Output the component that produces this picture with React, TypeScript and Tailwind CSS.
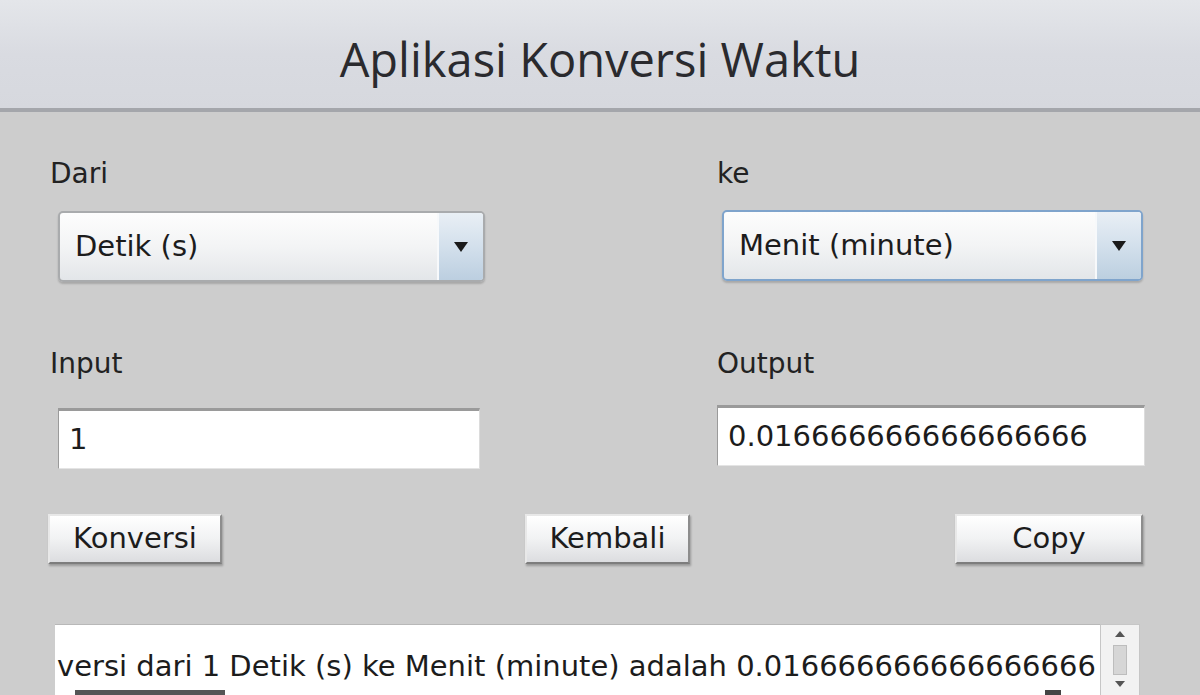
import React from 'react';

const font = { fontFamily: '"DejaVu Sans", "Liberation Sans", sans-serif' };

function Combo({ value, focused, className }: { value: string; focused?: boolean; className?: string }) {
    return (
        <div
            className={`flex h-[71px] rounded-[5px] border-2 ${focused ? 'border-[#7fa4cc]' : 'border-[#a9abad]'} bg-gradient-to-b from-[#fdfdfd] via-[#f3f4f5] to-[#e3e6e9] shadow-[0_2px_2px_rgba(0,0,0,0.18)] ${className ?? ''}`}
        >
            <div className="flex-1 flex items-center pl-[15px] text-[29px] text-[#1c1c1c]">{value}</div>
            <div className="w-[46px] flex items-center justify-center border-l-2 border-[#f7f9fb] bg-gradient-to-b from-[#e9eff5] via-[#d3e0ec] to-[#bccfe0] rounded-r-[3px]">
                <svg width="14" height="10" viewBox="0 0 14 10">
                    <path d="M0 0 H14 L7 10 Z" fill="#1a1a1a" />
                </svg>
            </div>
        </div>
    );
}

function Field({ value, className }: { value: string; className?: string }) {
    return (
        <div
            className={`h-[61px] bg-white border-t-[3px] border-l border-[#9a9a9a] border-r border-r-[#dcdcdc] border-b border-b-[#e4e4e4] flex items-center pl-[10px] text-[29px] text-[#1c1c1c] ${className ?? ''}`}
        >
            {value}
        </div>
    );
}

function Btn({ label, className }: { label: string; className?: string }) {
    return (
        <button
            className={`h-[50px] border-2 border-[#e8e8e8] border-r-[#8d8d8d] border-b-[#7d7d7d] bg-gradient-to-b from-[#ffffff] via-[#f1f2f3] to-[#dcdde0] shadow-[1px_2px_2px_rgba(0,0,0,0.25)] text-[29px] text-[#1c1c1c] flex items-center justify-center ${className ?? ''}`}
        >
            {label}
        </button>
    );
}

export default function App() {
    return (
        <div className="w-[1200px] h-[695px] overflow-hidden bg-[#cdcdcd] flex flex-col" style={font}>
            <div className="h-[112px] shrink-0 bg-gradient-to-b from-[#e4e6ea] via-[#d9dbe1] to-[#d6d8de] border-b-4 border-[#a4a6ab] flex items-center justify-center">
                <h1 className="text-[47px] text-[#2a2a2e] mt-[10px]" style={{ fontFamily: '"Open Sans", "Noto Sans", sans-serif' }}>
                    Aplikasi Konversi Waktu
                </h1>
            </div>

            <div className="pl-[50px] pt-[46px] flex flex-col">
                <div className="flex">
                    <div className="w-[667px] flex flex-col">
                        <span className="text-[28px] leading-[32px] text-[#222]">Dari</span>
                        <Combo value="Detik (s)" className="mt-[21px] ml-[8px] w-[427px]" />
                    </div>
                    <div className="flex flex-col">
                        <span className="text-[28px] leading-[32px] text-[#222]">ke</span>
                        <Combo value="Menit (minute)" focused className="mt-[20px] ml-[5px] w-[421px]" />
                    </div>
                </div>

                <div className="flex mt-[66px]">
                    <div className="w-[667px] flex flex-col">
                        <span className="text-[28px] leading-[32px] text-[#222]">Input</span>
                        <Field value="1" className="mt-[28px] ml-[8px] w-[422px]" />
                    </div>
                    <div className="flex flex-col">
                        <span className="text-[28px] leading-[32px] text-[#222]">Output</span>
                        <Field value="0.016666666666666666" className="mt-[25px] w-[428px] pl-[3px]" />
                    </div>
                </div>

                <div className="flex mt-[45px]">
                    <Btn label="Konversi" className="-ml-[2px] w-[174px]" />
                    <Btn label="Kembali" className="ml-[303px] w-[165px]" />
                    <Btn label="Copy" className="ml-[265px] w-[188px]" />
                </div>

                <div className="flex mt-[60px] ml-[5px]">
                    <div className="w-[1045px] h-[80px] bg-white border-t border-[#b8b8b8] flex flex-col">
                        <div className="h-[63px] flex items-end whitespace-nowrap pl-[2px] text-[29px] text-[#1c1c1c]">
                            versi dari 1 Detik (s) ke Menit (minute) adalah 0.016666666666666666
                        </div>
                        <div className="flex-1 flex items-start pt-[2px]">
                            <div className="ml-[20px] w-[150px] h-[6px] bg-[#555]" />
                            <div className="ml-[820px] w-[16px] h-[6px] bg-[#444]" />
                        </div>
                    </div>
                    <div className="w-[40px] h-[80px] bg-[#f2f2f2] border border-[#c6c6c6] flex flex-col items-center pt-[6px]">
                        <svg width="10" height="6" viewBox="0 0 10 6">
                            <path d="M0 6 L5 0 L10 6 Z" fill="#555" />
                        </svg>
                        <div className="mt-[8px] w-[14px] h-[30px] bg-[#d6d6d6] border border-[#bdbdbd]" />
                        <svg className="mt-[6px]" width="10" height="6" viewBox="0 0 10 6">
                            <path d="M0 0 L5 6 L10 0 Z" fill="#555" />
                        </svg>
                    </div>
                </div>
            </div>
        </div>
    );
}
